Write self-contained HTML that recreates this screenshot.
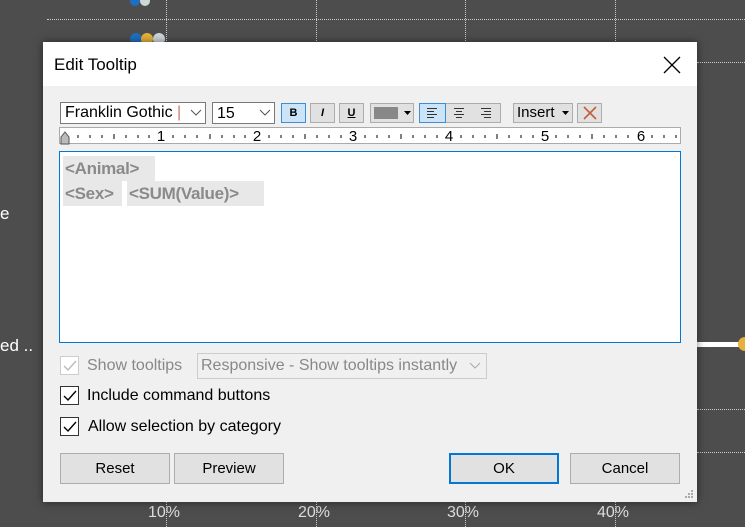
<!DOCTYPE html>
<html><head><style>
*{margin:0;padding:0;box-sizing:border-box}
body{width:745px;height:527px;background:#4d4d4d;position:relative;overflow:hidden;font-family:"Liberation Sans",sans-serif;font-size:15px;color:#000}
.a{position:absolute}
.vl{position:absolute;top:0;height:527px;border-left:1px dotted #ccc}
.hl{position:absolute;border-top:1px dotted #ccc}
.btn{position:absolute;height:31px;background:#e1e1e1;border:1px solid #adadad;text-align:center;line-height:29px;font-size:15px}
.cb{position:absolute;width:19px;height:19px;border:1px solid #333;background:#fff}
.tb{position:absolute;top:103px;height:20px;border:1px solid #adadad;background:#e1e1e1}
.tk{position:absolute;background:#e8e8e8;color:#8a8a8a;font-size:17px;line-height:25px;padding-left:2px;height:25px;font-weight:bold;letter-spacing:-0.3px}
</style></head><body>
<div class="vl" style="left:166px"></div><div class="vl" style="left:316px"></div><div class="vl" style="left:465px"></div><div class="vl" style="left:615px"></div>
<div class="hl" style="left:47px;top:19px;width:698px"></div>
<div class="hl" style="left:697px;top:62px;width:48px"></div>
<div class="hl" style="left:697px;top:409px;width:48px"></div>
<div class="hl" style="left:697px;top:452px;width:48px"></div>
<div class="a" style="left:130px;top:-4px;width:10px;height:10px;border-radius:5px;background:#1f6fc0"></div>
<div class="a" style="left:140px;top:-4px;width:10px;height:10px;border-radius:5px;background:#cfd6da"></div>
<div class="a" style="left:130px;top:33px;width:12px;height:12px;border-radius:6px;background:#1f6fc0"></div>
<div class="a" style="left:141px;top:33px;width:12px;height:12px;border-radius:6px;background:#e6b13a"></div>
<div class="a" style="left:153px;top:33px;width:12px;height:12px;border-radius:6px;background:#cfd6da"></div>
<div class="a" style="left:0;top:204px;color:#fff;font-size:17px">e</div>
<div class="a" style="left:0;top:336px;color:#fff;font-size:17px">ed ..</div>
<div class="a" style="left:697px;top:342px;width:48px;height:5px;background:#fff"></div>
<div class="a" style="left:738px;top:337px;width:14px;height:14px;border-radius:7px;background:#e6b13a"></div>
<div class="a" style="left:148px;top:504px;color:#ddd;font-size:16px">10%</div>
<div class="a" style="left:298px;top:504px;color:#ddd;font-size:16px">20%</div>
<div class="a" style="left:447px;top:504px;color:#ddd;font-size:16px">30%</div>
<div class="a" style="left:597px;top:504px;color:#ddd;font-size:16px">40%</div>

<div class="a" style="left:43px;top:42px;width:654px;height:460px;background:#f0f0f0;box-shadow:0 0 8px rgba(0,0,0,.5)">
 <div class="a" style="left:0;top:0;width:654px;height:44px;background:#fff"></div>
 <div class="a" style="left:11px;top:13px;font-size:17px">Edit Tooltip</div>
 <svg class="a" style="left:620px;top:14px" width="18" height="18"><path d="M1 1L17 17M17 1L1 17" stroke="#000" stroke-width="1.3"/></svg>
</div>
<div class="a" style="left:60px;top:102px;width:146px;height:22px;border:1px solid #7a7a7a;background:#fff;padding-left:4px;line-height:20px;font-size:16px">Franklin Gothic <span style="color:#c77">|</span></div>
<svg class="a" style="left:190px;top:109px" width="12" height="8"><path d="M1 1l5 5 5-5" fill="none" stroke="#555"/></svg>
<div class="a" style="left:212px;top:102px;width:63px;height:22px;border:1px solid #7a7a7a;background:#fff;padding-left:4px;line-height:22px;font-size:16px">15</div>
<svg class="a" style="left:259px;top:109px" width="12" height="8"><path d="M1 1l5 5 5-5" fill="none" stroke="#555"/></svg>
<div class="tb" style="left:281px;width:25px;background:#cce4f7;border-color:#3b8fd9;text-align:center;font-size:11px;font-weight:bold;line-height:18px">B</div>
<div class="tb" style="left:310px;width:25px;text-align:center;font-size:11px;font-style:italic;font-weight:bold;line-height:18px">I</div>
<div class="tb" style="left:339px;width:25px;text-align:center;font-size:11px;text-decoration:underline;font-weight:bold;line-height:18px">U</div>
<div class="tb" style="left:370px;width:44px"><div class="a" style="left:3px;top:3px;width:24px;height:12px;background:#888"></div><svg class="a" style="left:33px;top:7px" width="7" height="5"><path d="M0 0h7L3.5 4z" fill="#000"/></svg></div>
<div class="tb" style="left:419px;width:82px"></div>
<div class="tb" style="left:419px;width:27px;background:#cce4f7;border-color:#3b8fd9"></div>
<svg class="a" style="left:426px;top:107px" width="70" height="12"><g stroke="#333"><path d="M1 1.5h10M1 4.5h7M1 7.5h10M1 10.5h7"/><path d="M28 1.5h10M30 4.5h6M28 7.5h10M30 10.5h6"/><path d="M55 1.5h10M58 4.5h7M55 7.5h10M58 10.5h7"/></g></svg>
<div class="tb" style="left:513px;width:60px;font-size:15px;line-height:18px;padding-left:3px">Insert<svg style="position:absolute;left:48px;top:7px" width="7" height="5"><path d="M0 0h7L3.5 4z" fill="#000"/></svg></div>
<div class="tb" style="left:577px;width:25px"><svg class="a" style="left:5px;top:2px" width="14" height="14"><path d="M1 1L13 13M13 1L1 13" stroke="#c0603a" stroke-width="1.6"/></svg></div>
<div class="a" style="left:59px;top:127px;width:622px;height:17px;background:#fff;border:1px solid #aaa"></div>
<svg class="a" style="left:59px;top:127px" width="622" height="18">
<g stroke="#000" stroke-width="1">
<path d="M19 8v3M31 8v3M43 8v3M55 7v5M67 8v3M79 8v3M90 8v3M114 8v3M126 8v3M138 8v3M151 7v5M163 8v3M175 8v3M186 8v3M210 8v3M222 8v3M234 8v3M246 7v5M258 8v3M270 8v3M282 8v3M306 8v3M318 8v3M330 8v3M342 7v5M354 8v3M366 8v3M378 8v3M402 8v3M414 8v3M426 8v3M438 7v5M450 8v3M462 8v3M474 8v3M497 8v3M509 8v3M521 8v3M533 7v5M545 8v3M557 8v3M569 8v3M593 8v3M605 8v3M617 8v3"/>
</g>
<g font-family="Liberation Sans" font-size="15" text-anchor="middle"><text x="102" y="14">1</text><text x="198" y="14">2</text><text x="294" y="14">3</text><text x="390" y="14">4</text><text x="486" y="14">5</text><text x="582" y="14">6</text></g>
<path d="M2 17V10l4-5 4 5v7z" fill="#bbb" stroke="#555"/>
</svg>
<div class="a" style="left:59px;top:151px;width:622px;height:192px;background:#fff;border:1px solid #0078d7"></div>
<div class="tk" style="left:63px;top:156px;width:92px">&lt;Animal&gt;</div>
<div class="tk" style="left:63px;top:181px;width:59px">&lt;Sex&gt;</div>
<div class="tk" style="left:127px;top:181px;width:137px">&lt;SUM(Value)&gt;</div>
<div class="cb" style="left:60px;top:356px;border-color:#ccc"></div>
<svg class="a" style="left:62px;top:359px" width="16" height="14"><path d="M2 7l4 4 8-9" fill="none" stroke="#bbb" stroke-width="1.4"/></svg>
<div class="a" style="left:87px;top:357px;color:#888;font-size:16px">Show tooltips</div>
<div class="a" style="left:197px;top:353px;width:290px;height:26px;border:1px solid #ccc;background:#f0f0f0;color:#888;font-size:16px;line-height:24px;padding-left:3px">Responsive - Show tooltips instantly</div>
<svg class="a" style="left:469px;top:362px" width="12" height="8"><path d="M1 1l5 5 5-5" fill="none" stroke="#aaa"/></svg>
<div class="cb" style="left:60px;top:386px"></div>
<svg class="a" style="left:62px;top:389px" width="16" height="14"><path d="M2 7l4 4 8-9" fill="none" stroke="#000" stroke-width="1.4"/></svg>
<div class="a" style="left:87px;top:387px;font-size:16px">Include command buttons</div>
<div class="cb" style="left:60px;top:417px"></div>
<svg class="a" style="left:62px;top:420px" width="16" height="14"><path d="M2 7l4 4 8-9" fill="none" stroke="#000" stroke-width="1.4"/></svg>
<div class="a" style="left:88px;top:418px;font-size:16px">Allow selection by category</div>
<div class="btn" style="left:60px;top:453px;width:110px">Reset</div>
<div class="btn" style="left:174px;top:453px;width:110px">Preview</div>
<div class="btn" style="left:449px;top:453px;width:110px;border:2px solid #0078d7;line-height:27px">OK</div>
<div class="btn" style="left:570px;top:453px;width:110px">Cancel</div>
<svg class="a" style="left:684px;top:489px" width="10" height="10"><g fill="#aaa"><rect x="7" y="1" width="2" height="2"/><rect x="4" y="4" width="2" height="2"/><rect x="7" y="4" width="2" height="2"/><rect x="1" y="7" width="2" height="2"/><rect x="4" y="7" width="2" height="2"/><rect x="7" y="7" width="2" height="2"/></g></svg>
</body></html>
